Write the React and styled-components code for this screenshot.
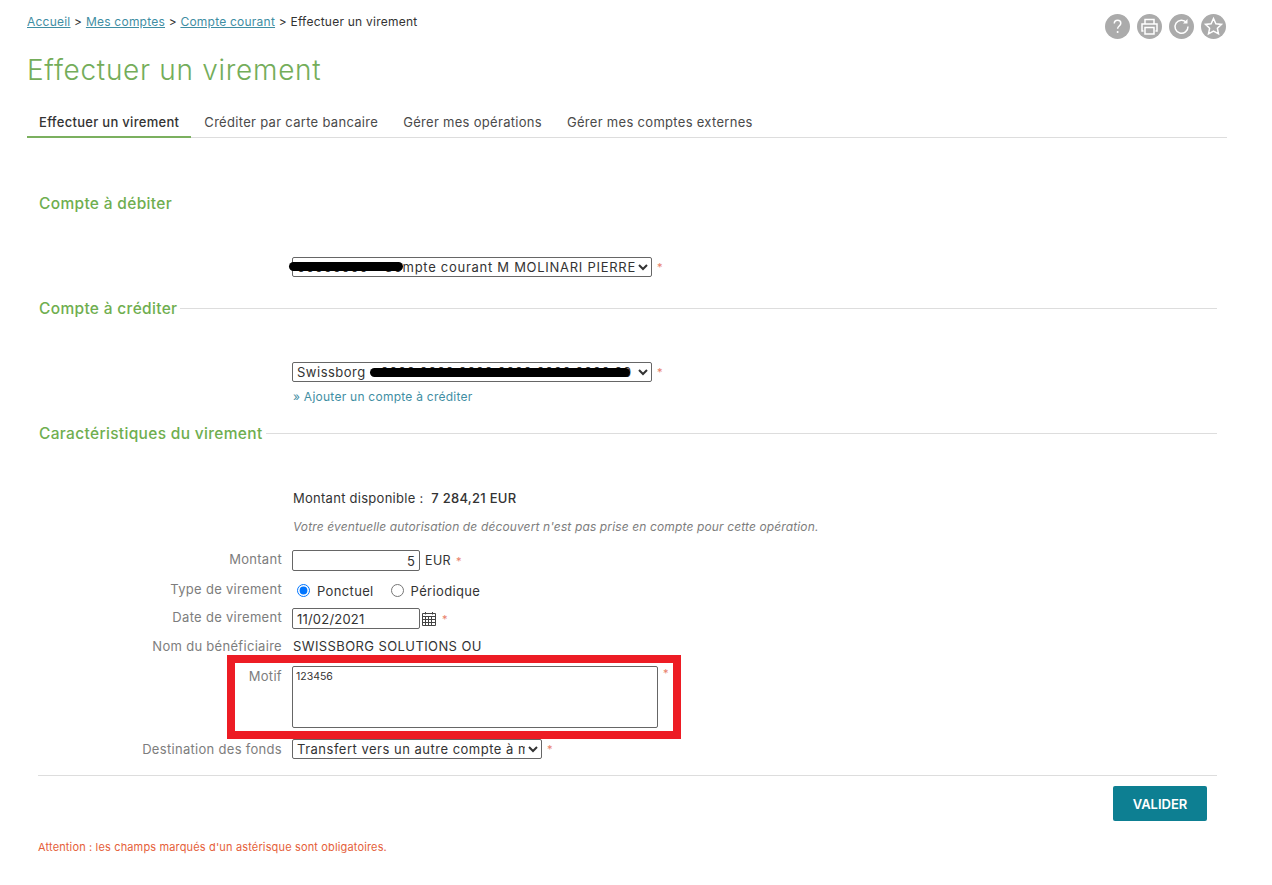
import React from 'react'
import styled, { createGlobalStyle } from 'styled-components'

const GlobalStyle = createGlobalStyle`
body {
    margin: 0;
    background: #fff;
    font-family: "Inter", "Open Sans", "Liberation Sans", sans-serif;
    font-size: 13px;
    color: #333;
}
`

function App() {
    return (
        <Page>
            <GlobalStyle />
            <TopBar>
                <Breadcrumb>
                    <a href="#a">Accueil</a> &gt; <a href="#b">Mes comptes</a> &gt; <a href="#c">Compte courant</a> &gt; Effectuer un virement
                </Breadcrumb>
                <Tools>
                    <ToolButton>
                        <svg viewBox="0 0 25 25" width="25" height="25"><path d="M9.3 9.6c0-2 1.5-3.3 3.3-3.3s3.2 1.2 3.2 3c0 2.6-3.2 2.8-3.2 5.4" /><circle cx="12.6" cy="18" r="1" fill="#fff" stroke="none" /></svg>
                    </ToolButton>
                    <ToolButton>
                        <svg viewBox="0 0 25 25" width="25" height="25"><path d="M8 10V5.5h9V10M6.5 17H5V10h15v7h-1.500M8 13.500h9v6.500H8z" /></svg>
                    </ToolButton>
                    <ToolButton>
                        <svg viewBox="0 0 25 25" width="25" height="25"><path d="M17.500 8.500a6.500 6.500 0 1 0 1.500 4" /><path d="M18.500 5v4.500H14" fill="#fff" stroke="none" /></svg>
                    </ToolButton>
                    <ToolButton>
                        <svg viewBox="0 0 25 25" width="25" height="25"><path d="M12.500 4.500l2.400 5.200 5.600.7-4.100 3.900 1.100 5.600-5-2.800-5 2.800 1.100-5.600-4.100-3.900 5.600-.7z" /></svg>
                    </ToolButton>
                </Tools>
            </TopBar>

            <Title>Effectuer un virement</Title>

            <Tabs>
                <Tab $active>Effectuer un virement</Tab>
                <Tab>Créditer par carte bancaire</Tab>
                <Tab>Gérer mes opérations</Tab>
                <Tab>Gérer mes comptes externes</Tab>
            </Tabs>

            <Content>
                <SectionTitle $top={55}>Compte à débiter</SectionTitle>
                <Row $top={44}>
                    <Label />
                    <Redacted>
                        <Select $width={360} $spacing={0.72}>
                            <option>00000000 - Compte courant M MOLINARI PIERRE</option>
                        </Select>
                        <Scribble $left={-3} $top={5} $width={114} />
                    </Redacted>
                    <Star>*</Star>
                </Row>

                <SectionTitle $top={21} $line>Compte à créditer</SectionTitle>
                <Row $top={44}>
                    <Label />
                    <Redacted>
                        <Select $width={360} $spacing={0.5}>
                            <option>Swissborg - 0000 0000 0000 0000 0000 0000 00</option>
                        </Select>
                        <Scribble $left={78} $top={6} $width={260} />
                    </Redacted>
                    <Star>*</Star>
                </Row>
                <Row $top={8}>
                    <Label />
                    <AddLink href="#d">» Ajouter un compte à créditer</AddLink>
                </Row>

                <SectionTitle $top={19} $line>Caractéristiques du virement</SectionTitle>
                <Row $top={47}>
                    <Label />
                    <Available>Montant disponible :&nbsp; <strong>7 284,21 EUR</strong></Available>
                </Row>
                <Row $top={14}>
                    <Label />
                    <Note>Votre éventuelle autorisation de découvert n'est pas prise en compte pour cette opération.</Note>
                </Row>
                <Row $top={16}>
                    <LiftedLabel>Montant</LiftedLabel>
                    <Input $right defaultValue="5" />
                    <Unit>EUR</Unit>
                    <Star>*</Star>
                </Row>
                <Row $top={10}>
                    <LiftedLabel>Type de virement</LiftedLabel>
                    <Radio><input type="radio" name="type" defaultChecked /> Ponctuel</Radio>
                    <Radio><input type="radio" name="type" /> Périodique</Radio>
                </Row>
                <Row $top={8}>
                    <LiftedLabel>Date de virement</LiftedLabel>
                    <Input defaultValue="11/02/2021" />
                    <CalendarIcon viewBox="0 0 16 16" width="16" height="16">
                        <path d="M1.500 2.500h13v12h-13zM1.500 5.500h13M4.500 5.500v9M7.500 5.500v9M10.500 5.500v9M1.500 8.500h13M1.500 11.500h13M4.500 1v2.500M11.500 1v2.500" />
                    </CalendarIcon>
                    <Star>*</Star>
                </Row>
                <Row $top={9}>
                    <Label>Nom du bénéficiaire</Label>
                    <Value>SWISSBORG SOLUTIONS OU</Value>
                </Row>
                <MotifRow>
                    <MotifLabel>Motif</MotifLabel>
                    <Motif defaultValue="123456" />
                    <MotifStar>*</MotifStar>
                    <Highlight />
                </MotifRow>
                <Row $top={11}>
                    <Label>Destination des fonds</Label>
                    <Select $width={250} $spacing={0.5}>
                        <option>Transfert vers un autre compte à mon nom</option>
                    </Select>
                    <Star>*</Star>
                </Row>

                <Footer>
                    <Submit>VALIDER</Submit>
                </Footer>
                <Warning>Attention : les champs marqués d'un astérisque sont obligatoires.</Warning>
            </Content>
        </Page>
    )
}

export default App


const Page = styled.div`
width: 1200px;
margin-left: 27px;
`

const TopBar = styled.div`
display: flex;
justify-content: space-between;
align-items: flex-start;
padding-top: 14px;
`

const Breadcrumb = styled.div`
margin-top: 1px;
font-size: 12px;
line-height: 14px;
letter-spacing: 0.23px;
color: #333;
a {
    color: #3f8ea3;
}
`

const Tools = styled.div`
display: flex;
gap: 7px;
margin-right: 1px;
`

const ToolButton = styled.div`
width: 25px;
height: 25px;
border-radius: 50%;
background: #ababab;
svg {
    display: block;
    fill: none;
    stroke: #fff;
    stroke-width: 1.5;
}
`

const Title = styled.h1`
margin: 14px 0 0;
font-size: 28px;
line-height: 34px;
font-weight: 300;
color: #74ad5a;
letter-spacing: 0.7px;
`

const Tabs = styled.div`
display: flex;
margin-top: 21px;
border-bottom: 1px solid #ddd;
`

const Tab = styled.div`
height: 30px;
box-sizing: border-box;
padding: 0 12px;
margin-right: 1px;
margin-bottom: -1px;
line-height: 29px;
font-size: 13px;
letter-spacing: 0.3px;
font-weight: ${props => props.$active ? 500 : 400};
color: ${props => props.$active ? '#333' : '#4a4a4a'};
border-bottom: 2px solid ${props => props.$active ? '#7bb05f' : 'transparent'};
`

const Content = styled.div`
margin-left: 11px;
width: 1179px;
`

const SectionTitle = styled.h2`
display: flex;
align-items: center;
height: 20px;
margin: ${props => props.$top}px 0 0;
padding-left: 1px;
font-size: 15.5px;
font-weight: 500;
letter-spacing: 0.33px;
color: #6fae4f;
&::after {
    content: "";
    flex: 1;
    height: 1px;
    margin-left: 3px;
    background: ${props => props.$line ? '#ddd' : 'transparent'};
}
`

const Row = styled.div`
display: flex;
align-items: center;
margin-top: ${props => props.$top}px;
`

const Label = styled.div`
flex: none;
width: 244px;
margin-right: 10px;
text-align: right;
font-size: 13px;
line-height: 16px;
letter-spacing: 0.3px;
color: #7d7d7d;
`

const LiftedLabel = styled(Label)`
margin-bottom: 3px;
`

const Redacted = styled.div`
position: relative;
display: flex;
`

const Select = styled.select`
width: ${props => props.$width}px;
height: 20px;
padding: 0;
box-sizing: border-box;
font-family: inherit;
font-size: 13px;
letter-spacing: ${props => props.$spacing}px;
color: #333;
background: #fff;
border: 1px solid #666;
border-radius: 2px;
`

const Scribble = styled.div`
position: absolute;
left: ${props => props.$left}px;
top: ${props => props.$top}px;
width: ${props => props.$width}px;
height: 9px;
background: #000;
border-radius: 5px;
`

const Star = styled.span`
margin-left: 5px;
font-size: 11px;
color: #e8806a;
`

const AddLink = styled.a`
padding-left: 1px;
font-size: 12px;
line-height: 14px;
letter-spacing: 0.25px;
color: #3f8ea3;
text-decoration: none;
`

const Available = styled.div`
padding-left: 1px;
font-size: 13px;
line-height: 16px;
letter-spacing: 0.27px;
strong {
    font-weight: 500;
}
`

const Note = styled.div`
padding-left: 1px;
font-size: 12px;
line-height: 14px;
letter-spacing: 0.13px;
font-style: italic;
color: #7d7d7d;
`

const Input = styled.input`
width: 128px;
height: 21px;
padding: 0 4px;
box-sizing: border-box;
font-family: inherit;
font-size: 13px;
letter-spacing: 0.2px;
color: #333;
text-align: ${props => props.$right ? 'right' : 'left'};
border: 1px solid #666;
border-radius: 2px;
`

const Unit = styled.span`
margin-left: 5px;
font-size: 12.5px;
letter-spacing: 0.4px;
`

const Radio = styled.label`
display: flex;
align-items: center;
gap: 7px;
margin-left: 5px;
margin-right: 12px;
font-size: 13px;
letter-spacing: 0.35px;
input {
    margin: 0;
}
`

const CalendarIcon = styled.svg`
margin-left: 1px;
fill: none;
stroke: #444;
stroke-width: 1;
`

const Value = styled.div`
padding-left: 1px;
font-size: 13px;
line-height: 16px;
letter-spacing: 0.4px;
`

const MotifRow = styled(Row)`
position: relative;
align-items: flex-start;
margin-top: 12px;
`

const MotifLabel = styled(Label)`
padding-top: 2px;
`

const MotifStar = styled(Star)`
line-height: 14px;
`

const Motif = styled.textarea`
width: 366px;
height: 62px;
padding: 3px;
box-sizing: border-box;
resize: none;
font-family: inherit;
font-size: 10.5px;
color: #333;
border: 1px solid #666;
border-radius: 2px;
`

const Highlight = styled.div`
position: absolute;
left: 189px;
top: -11px;
width: 454px;
height: 84px;
box-sizing: border-box;
border: 8px solid #ed1c24;
pointer-events: none;
`

const Footer = styled.div`
display: flex;
justify-content: flex-end;
margin-top: 16px;
padding: 10px 10px 0 0;
border-top: 1px solid #ddd;
`

const Submit = styled.button`
width: 94px;
height: 35px;
border: 0;
border-radius: 2px;
background: #0d7f92;
color: #fff;
font-family: inherit;
font-size: 13px;
font-weight: 600;
`

const Warning = styled.div`
margin-top: 19px;
font-size: 11px;
line-height: 14px;
letter-spacing: 0.15px;
color: #e5603a;
`
